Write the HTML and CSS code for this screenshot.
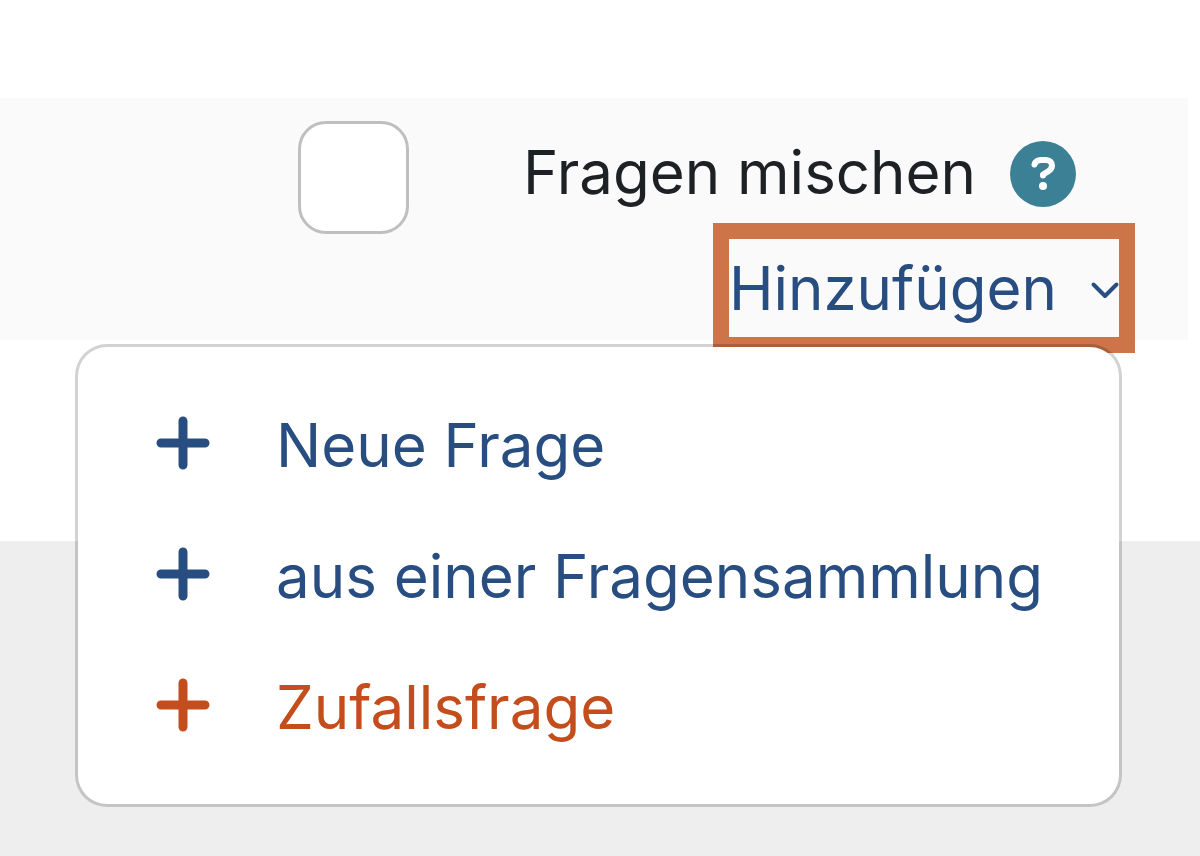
FILE: index.html
```
<!DOCTYPE html>
<html lang="de">
<head>
    <meta charset="UTF-8">
    <meta name="viewport" content="width=device-width, initial-scale=1.0">
    <title>Fragen</title>
    <link rel="stylesheet" href="styles.css">
</head>
<body>
    <main>
        <div class="toolbar">
            <!-- Shuffle option -->
            <div class="shuffle">
                <input type="checkbox" id="shuffle">
                <div class="shuffle-label">
                    <label for="shuffle">Fragen mischen</label>
                    <button class="help" type="button" aria-label="Hilfe">
                        <svg viewBox="0 0 66 66" fill="none">
                            <circle cx="33" cy="33" r="33" fill="#3c8095"/>
                            <path d="M24.500 23.500C25.500 20 28 19 31 19H36C40 19 42 21.500 42 24.500C42 27.500 40.500 29 38 30.500L33 33.500V34.500" stroke="#fff" stroke-width="6" stroke-linecap="round" stroke-linejoin="round"/>
                            <circle cx="33" cy="45" r="4" fill="#fff"/>
                        </svg>
                    </button>
                </div>
            </div>

            <!-- Add menu -->
            <div class="dropdown">
                <button class="dropdown-toggle" type="button" aria-expanded="true">
                    Hinzufügen
                    <svg class="chevron" viewBox="0 0 28 24" fill="none" stroke="currentColor" stroke-width="4" stroke-linecap="round" stroke-linejoin="round">
                        <path d="M2.500 8.500L14 20L25.500 8.500"/>
                    </svg>
                </button>
                <div class="dropdown-menu">
                    <a href="#" class="item">
                        <svg class="plus" viewBox="0 2 54 54"><path d="M27 5V49M5 27H49"/></svg>
                        Neue Frage
                    </a>
                    <a href="#" class="item">
                        <svg class="plus" viewBox="0 2 54 54"><path d="M27 5V49M5 27H49"/></svg>
                        aus einer Fragensammlung
                    </a>
                    <a href="#" class="item active">
                        <svg class="plus" viewBox="0 2 54 54"><path d="M27 5V49M5 27H49"/></svg>
                        Zufallsfrage
                    </a>
                </div>
            </div>
        </div>
    </main>
    <footer></footer>
</body>
</html>
```
FILE: styles.css
```
/* General styles */
* {
    box-sizing: border-box;
}

body {
    font-family: Inter, "Liberation Sans", sans-serif;
    font-size: 60px;
    line-height: 90px;
    color: #1d2125;
    margin: 0;
    min-height: 100vh;
    display: flex;
    flex-direction: column;
    background-color: #fff;
}

button {
    font: inherit;
    border: none;
    padding: 0;
    background: none;
    cursor: pointer;
}

svg {
    display: block;
    flex-shrink: 0;
    overflow: visible;
}

main {
    padding: 98px 12px 201px 0;
}

footer {
    flex-grow: 1;
    background-color: #eee;
}

.toolbar {
    display: flex;
    flex-direction: column;
    align-items: flex-end;
    gap: 5px;
    padding: 23px 69px 3px 0;
    background-color: #fafafa;
}

/* Shuffle option */
.shuffle {
    display: flex;
    align-items: flex-start;
    gap: 114px;
    margin-right: 43px;
    white-space: nowrap;
}

.shuffle input {
    appearance: none;
    width: 111px;
    height: 113px;
    margin: 0;
    border: 3px solid #bfbfbf;
    border-radius: 28px;
    background-color: #fff;
}

.shuffle input:checked {
    background-color: #284d80;
}

.shuffle-label {
    display: flex;
    align-items: center;
    gap: 34px;
    height: 106px;
}

.shuffle-label label {
    height: 94px;
}

.help {
    width: 66px;
    height: 66px;
}

/* Add menu */
.dropdown {
    position: relative;
}

.dropdown-toggle {
    display: flex;
    align-items: center;
    gap: 34px;
    height: 98px;
    color: #284d80;
    outline: 16px solid #cd7548;
    white-space: nowrap;
}

.chevron {
    width: 28px;
    height: 24px;
}

.dropdown-menu {
    position: absolute;
    top: 105px;
    right: -3px;
    width: 1047px;
    padding: 32px 0;
    border: 3px solid rgba(0, 0, 0, 0.176);
    border-radius: 32px;
    background-color: #fff;
    background-clip: padding-box;
}

.item {
    display: flex;
    align-items: center;
    gap: 66px;
    height: 131px;
    padding: 0 78px;
    color: #284d80;
    text-decoration: none;
    white-space: nowrap;
}

.item.active {
    color: #c34d1c;
}

.plus {
    width: 54px;
    height: 54px;
    fill: none;
    stroke: currentColor;
    stroke-width: 9px;
    stroke-linecap: round;
}
```
